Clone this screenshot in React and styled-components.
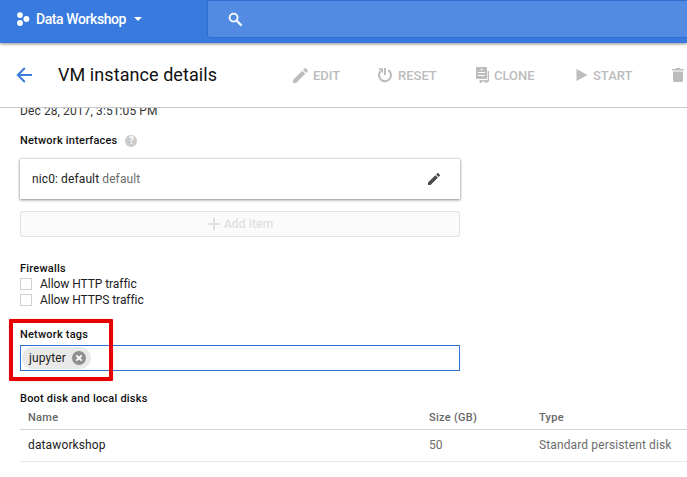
import React from "react";
import styled, { createGlobalStyle } from "styled-components";

const Global = createGlobalStyle`
  * { box-sizing: border-box; }
  html, body { margin: 0; padding: 0; overflow: hidden; background: #fff; }
  body { font-family: Roboto, "Liberation Sans", sans-serif; font-size: 12px; color: #212121; }
`;

const Page = styled.div`
  width: 687px;
  height: 477px;
  overflow: hidden;
  display: flex;
  flex-direction: column;
  background: #fff;
`;

const TopBar = styled.header`
  flex: 0 0 43px;
  display: flex;
  background: #387ade;
  box-shadow: 0 1px 3px rgba(0, 0, 0, 0.45);
`;

const Project = styled.div`
  flex: 0 0 208px;
  height: 37px;
  padding-left: 16px;
  display: flex;
  align-items: center;
  color: #fff;
`;

const ProjectName = styled.span`
  margin: 0 7px 0 6px;
  width: 91px;
  font-size: 14px;
  line-height: 20px;
  font-weight: 500;
  letter-spacing: -0.42px;
  white-space: nowrap;
`;

const Search = styled.div`
  flex: 1;
  height: 36px;
  margin-top: 1px;
  padding-left: 20px;
  display: flex;
  align-items: center;
  background: #538be3;
  border-radius: 2px 0 0 2px;
  box-shadow: 0 0 1px 1px rgba(30, 80, 170, 0.3);
`;

const Toolbar = styled.div`
  flex: 0 0 65px;
  display: flex;
  align-items: center;
  border-bottom: 1px solid #c9c9c9;
  padding-left: 16px;
`;

const Title = styled.h1`
  margin: 0 0 0 25px;
  width: 235px;
  font-size: 18px;
  line-height: 24px;
  font-weight: 400;
  letter-spacing: 0.07px;
  color: #111;
  white-space: nowrap;
`;

const Action = styled.div`
  flex: 0 0 ${(p) => p.$width}px;
  display: flex;
  align-items: center;
  gap: 5px;
  color: #bcbcbc;
  font-size: 13px;
  font-weight: 500;
  letter-spacing: 0;
  white-space: nowrap;
  svg { flex: none; overflow: visible; }
`;

const Content = styled.main`
  flex: 1;
  min-height: 0;
  overflow: hidden;
  padding-left: 20px;
`;

const Timestamp = styled.div`
  margin-top: -5px;
  line-height: 16px;
  letter-spacing: 0.1px;
  color: #333;
`;

const Label = styled.div`
  display: flex;
  align-items: center;
  gap: 8px;
  margin-top: ${(p) => p.$top}px;
  margin-bottom: ${(p) => p.$bottom || 0}px;
  height: 16px;
  font-size: 11px;
  font-weight: 500;
  line-height: 16px;
  letter-spacing: 0.21px;
  color: #111;
  white-space: nowrap;
`;

const Card = styled.div`
  width: 440px;
  height: 40px;
  margin-top: 10px;
  padding: 0 20px 0 12px;
  display: flex;
  align-items: center;
  justify-content: space-between;
  letter-spacing: 0.11px;
  box-shadow: 0 0 1px 1px rgba(0, 0, 0, 0.07), 0 1px 3px rgba(0, 0, 0, 0.4);
`;

const EditSlot = styled.span`
  display: flex;
  color: #4a4a4a;
`;

const Muted = styled.span`
  color: #6c6c6c;
`;

const AddButton = styled.div`
  width: 440px;
  height: 26px;
  margin-top: 12px;
  padding-left: 1px;
  border: 1px solid #e2e2e2;
  border-radius: 2px;
  background: #fbfbfb;
  color: #e1e1e1;
  display: flex;
  align-items: center;
  justify-content: center;
  gap: 4px;
  letter-spacing: 0.15px;
  font-weight: 500;
`;

const Option = styled.div`
  display: flex;
  align-items: center;
  gap: 8px;
  height: 16px;
  letter-spacing: -0.06px;
`;

const Checkbox = styled.span`
  width: 12px;
  height: 12px;
  border: 1px solid #d0d0d0;
`;

const Tags = styled.div`
  width: 440px;
  height: 26px;
  margin-top: 2px;
  padding-left: 1px;
  border: 1px solid #3071cf;
  display: flex;
  align-items: center;
`;

const Chip = styled.div`
  width: 69px;
  height: 22px;
  border-radius: 11px;
  padding-left: 7px;
  background: #e9e9e9;
  display: flex;
  align-items: center;
  gap: 6px;
  letter-spacing: 0.1px;
`;

const TagField = styled.section`
  position: relative;
  margin-top: 19px;
`;

const Highlight = styled.div`
  position: absolute;
  left: -11px;
  top: -8px;
  width: 104px;
  height: 62px;
  border: 4px solid #e60000;
  border-radius: 1px;
  box-shadow: 0 0 1px rgba(110, 0, 0, 0.5);
`;

const TableRow = styled.div`
  display: grid;
  grid-template-columns: 401px 110px 1fr;
  align-items: center;
  height: ${(p) => (p.$head ? 23 : 32)}px;
  padding: 0 0 ${(p) => (p.$head ? 2 : 1)}px 8px;
  border-bottom: 1px solid ${(p) => (p.$head ? "#d3d3d3" : "#e8e8e8")};
  font-size: ${(p) => (p.$head ? 11 : 12)}px;
  font-weight: ${(p) => (p.$head ? 500 : 400)};
  color: ${(p) => (p.$head ? "#666" : "#212121")};
  letter-spacing: ${(p) => (p.$head ? 0.28 : 0.13)}px;
  white-space: nowrap;
`;

const PENCIL =
  "M3 17.25V21h3.75L17.81 9.94l-3.75-3.75L3 17.25zM20.71 7.04a1 1 0 0 0 0-1.41l-2.34-2.34a1 1 0 0 0-1.41 0l-1.83 1.83 3.75 3.75 1.83-1.83z";

const Pencil = ({ size }) => (
  <svg width={size} height={size} viewBox="3 3 18 18" fill="currentColor">
    <path d={PENCIL} />
  </svg>
);

const ProjectIcon = () => (
  <svg width="14" height="14" viewBox="0 0 14 14" fill="#fff">
    <circle cx="4" cy="3.1" r="2.9" />
    <circle cx="10.4" cy="7" r="3" />
    <circle cx="4" cy="11" r="2.9" />
  </svg>
);

const Caret = () => (
  <svg width="8" height="4" viewBox="0 0 8 4">
    <path d="M0 0h8L4 4z" fill="#fff" />
  </svg>
);

const SearchIcon = () => (
  <svg width="15" height="15" viewBox="0 0 15 15" fill="none" stroke="#fff">
    <circle cx="5.6" cy="5.6" r="4" strokeWidth="1.8" />
    <path d="M8.7 8.7l4.8 4.8" strokeWidth="2.2" />
  </svg>
);

const BackIcon = () => (
  <svg width="17" height="16" viewBox="0 0 17 16" fill="none" stroke="#3b7bdd" strokeWidth="2">
    <path d="M16 8H2M8.8 1L1.8 8l7 7" />
  </svg>
);

const ResetIcon = () => (
  <svg width="16" height="16" viewBox="0 0 16 16" fill="none" stroke="currentColor">
    <path d="M11.3 3.2a6 6 0 1 1-7.8 1" strokeWidth="2.1" />
    <path d="M8 1v7" strokeWidth="2" />
    <path d="M1 1.2h5v5z" fill="currentColor" stroke="none" />
  </svg>
);

const CloneIcon = () => (
  <svg width="13" height="16" viewBox="0 0 13 16" fill="none">
    <path
      d="M1.3 0h8.4Q11 0 11 1.3v10.4H9.4V12H1.6v-.3H0V1.3Q0 0 1.3 0z"
      fill="currentColor"
    />
    <path d="M2 5.5h7M2 8.5h7" stroke="#fff" strokeWidth="1" />
    <circle cx="5.5" cy="2.5" r=".9" fill="#fff" />
    <path d="M12.4 4v10H4" stroke="currentColor" strokeWidth="1.4" />
    <path d="M3.6 13h1.8v3H3.6zM9.4 13h1.8v3H9.4z" fill="currentColor" />
  </svg>
);

const PlayIcon = () => (
  <svg width="12" height="12" viewBox="0 0 12 12">
    <path d="M.5 0v12L11.5 6z" fill="currentColor" />
  </svg>
);

const TrashIcon = () => (
  <svg width="12" height="14" viewBox="0 0 12 14" fill="currentColor">
    <path d="M0 1h3.4l.8-1h3.6l.8 1H12v1.6H0zM1 3.6h10v8.9q0 1.5-1.5 1.5h-7Q1 14 1 12.5z" />
  </svg>
);

const HelpDot = styled.span`
  width: 12px;
  height: 12px;
  border-radius: 50%;
  background: #cbcbcb;
  color: #fff;
  font-size: 10px;
  font-weight: 700;
  line-height: 12px;
  letter-spacing: 0;
  text-align: center;
`;

const PlusIcon = () => (
  <svg width="12" height="12" viewBox="0 0 12 12">
    <path d="M5 0h2v5h5v2H7v5H5V7H0V5h5z" fill="currentColor" />
  </svg>
);

const RemoveIcon = () => (
  <svg width="14" height="14" viewBox="0 0 14 14">
    <circle cx="7" cy="7" r="7" fill="#8f8f8f" />
    <path d="M4.3 4.3l5.4 5.4M9.7 4.3L4.3 9.7" stroke="#fff" strokeWidth="1.9" />
  </svg>
);

export default function App() {
  return (
    <>
      <Global />
      <Page>
        <TopBar>
          <Project>
            <ProjectIcon />
            <ProjectName>Data Workshop</ProjectName>
            <Caret />
          </Project>
          <Search>
            <SearchIcon />
          </Search>
        </TopBar>
        <Toolbar>
          <BackIcon />
          <Title>VM instance details</Title>
          <Action $width={84}><Pencil size={15} />EDIT</Action>
          <Action $width={99}><ResetIcon />RESET</Action>
          <Action $width={100}><CloneIcon />CLONE</Action>
          <Action $width={96}><PlayIcon />START</Action>
          <Action $width={12}><TrashIcon /></Action>
        </Toolbar>
        <Content>
          <Timestamp>Dec 28, 2017, 3:51:05 PM</Timestamp>
          <Label $top={14}>
            Network interfaces
            <HelpDot>?</HelpDot>
          </Label>
          <Card>
            <span>nic0: default <Muted>default</Muted></span>
            <EditSlot><Pencil size={12} /></EditSlot>
          </Card>
          <AddButton><PlusIcon />Add item</AddButton>
          <Label $top={24} $bottom={-1}>Firewalls</Label>
          <Option><Checkbox />Allow HTTP traffic</Option>
          <Option><Checkbox />Allow HTTPS traffic</Option>
          <TagField>
            <Label $top={0}>Network tags</Label>
            <Tags>
              <Chip>jupyter<RemoveIcon /></Chip>
            </Tags>
            <Highlight />
          </TagField>
          <Label $top={20}>Boot disk and local disks</Label>
          <TableRow $head>
            <span>Name</span>
            <span>Size (GB)</span>
            <span>Type</span>
          </TableRow>
          <TableRow>
            <span>dataworkshop</span>
            <Muted>50</Muted>
            <Muted>Standard persistent disk</Muted>
          </TableRow>
        </Content>
      </Page>
    </>
  );
}
